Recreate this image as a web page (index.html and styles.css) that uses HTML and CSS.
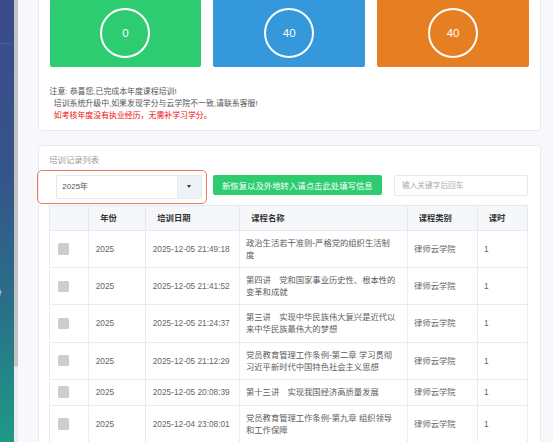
FILE: index.html
```html
<!DOCTYPE html>
<html lang="zh-CN">
<head>
<meta charset="utf-8">
<title>培训记录</title>
<link rel="stylesheet" href="styles.css">
</head>
<body>
<div class="layout">
  <aside class="sidebar">
    <div class="side-divider"></div>
    <div class="side-item">分</div>
  </aside>
  <div class="scrollbar"><div class="thumb"></div></div>
  <main class="main">
    <section class="panel panel-stats">
      <div class="stats">
        <div class="stat stat-green"><div class="ring">0</div></div>
        <div class="stat stat-blue"><div class="ring">40</div></div>
        <div class="stat stat-orange"><div class="ring">40</div></div>
      </div>
      <div class="notes">
        <p>注意: 恭喜您,已完成本年度课程培训!</p>
        <p class="indent">培训系统升级中,如果发现学分与云学院不一致,请联系客服!</p>
        <p class="indent warn">如考核年度没有执业经历，无需补学习学分。</p>
      </div>
    </section>
    <section class="panel panel-list">
      <div class="panel-title">培训记录列表</div>
      <div class="toolbar">
        <div class="highlight"></div>
        <div class="select">
          <span class="select-value">2025年</span>
          <span class="select-btn"><i class="caret"></i></span>
        </div>
        <button class="btn-green" type="button">新恢复以及外地转入请点击此处填写信息</button>
        <input class="search" type="text" placeholder="输入关键字后回车">
      </div>
      <table class="records">
        <colgroup>
          <col class="c-check"><col class="c-year"><col class="c-date"><col class="c-name"><col class="c-type"><col class="c-hours">
        </colgroup>
        <thead>
          <tr><th></th><th>年份</th><th>培训日期</th><th>课程名称</th><th>课程类别</th><th>课时</th></tr>
        </thead>
        <tbody>
          <tr><td class="cb"><span class="box"></span></td><td>2025</td><td>2025-12-05 21:49:18</td><td class="name">政治生活若干准则-严格党的组织生活制<br>度</td><td>律师云学院</td><td>1</td></tr>
          <tr><td class="cb"><span class="box"></span></td><td>2025</td><td>2025-12-05 21:41:52</td><td class="name">第四讲　党和国家事业历史性、根本性的<br>变革和成就</td><td>律师云学院</td><td>1</td></tr>
          <tr><td class="cb"><span class="box"></span></td><td>2025</td><td>2025-12-05 21:24:37</td><td class="name">第三讲　实现中华民族伟大复兴是近代以<br>来中华民族最伟大的梦想</td><td>律师云学院</td><td>1</td></tr>
          <tr><td class="cb"><span class="box"></span></td><td>2025</td><td>2025-12-05 21:12:29</td><td class="name">党员教育管理工作条例-第二章 学习贯彻<br>习近平新时代中国特色社会主义思想</td><td>律师云学院</td><td>1</td></tr>
          <tr><td class="cb"><span class="box"></span></td><td>2025</td><td>2025-12-05 20:08:39</td><td class="name">第十三讲　实现我国经济高质量发展</td><td>律师云学院</td><td>1</td></tr>
          <tr><td class="cb"><span class="box"></span></td><td>2025</td><td>2025-12-04 23:08:01</td><td class="name">党员教育管理工作条例-第九章 组织领导<br>和工作保障</td><td>律师云学院</td><td>1</td></tr>
        </tbody>
      </table>
    </section>
  </main>
</div>
</body>
</html>
```

FILE: styles.css
```css
* { box-sizing: border-box; }
html, body { margin: 0; height: 100%; }
body {
  font-family: "Liberation Sans", "Noto Sans CJK SC", sans-serif;
  font-size: 8.3px;
  color: #666;
  background: #f6f8fb;
  overflow: hidden;
}
.layout { display: flex; height: 442px; overflow: hidden; }

.sidebar {
  width: 14px;
  flex: none;
  display: flex;
  flex-direction: column;
  overflow: hidden;
  background: linear-gradient(180deg, #3a4b8b 0%, #35558a 40%, #2a6e89 68%, #1d9a86 100%);
}
.side-divider { margin-top: 43px; width: 11px; height: 1px; background: rgba(255,255,255,0.12); }
.side-item {
  margin-top: 243px;
  margin-left: -7px;
  color: rgba(255,255,255,0.85);
  font-size: 9px;
  line-height: 12px;
  white-space: nowrap;
}
.scrollbar { width: 4px; flex: none; background: #ededed; }
.thumb { height: 367px; background: #c4c4c4; border-radius: 0 0 2px 2px; }

.main { flex: 1; min-width: 0; padding: 0 12px 0 19.5px; overflow: hidden; }
.panel { background: #fff; border: 1px solid #e7ebf1; border-radius: 3px; }

.panel-stats { margin-top: -13px; padding: 11px 11px 7.6px 11px; }
.stats { display: grid; grid-template-columns: repeat(3, 1fr); gap: 12px; }
.stat {
  height: 68px;
  border-radius: 2px;
  display: flex;
  align-items: center;
  justify-content: center;
}
.stat-green { background: #2ecc71; }
.stat-blue { background: #3498db; }
.stat-orange { background: #e67e22; }
.ring {
  width: 50px;
  height: 50px;
  border: 2px solid #fff;
  border-radius: 50%;
  display: flex;
  align-items: center;
  justify-content: center;
  color: #fff;
  font-size: 11.5px;
}
.notes { margin-top: 18.5px; font-size: 7.9px; line-height: 12.3px; color: #555; }
.notes p { margin: 0; }
.notes .indent { padding-left: 4.3px; }
.notes .warn { color: #f20d0d; }

.panel-list { margin-top: 14px; padding: 8px 12px 0 10.8px; }
.panel-title { color: #9a9a9a; font-size: 8.3px; line-height: 12px; }
.toolbar { position: relative; display: flex; align-items: flex-start; margin-top: 9px; }
.highlight {
  position: absolute;
  left: -12px;
  top: -5px;
  width: 169.4px;
  height: 34px;
  border: 1px solid #ee7966;
  border-radius: 5px;
  pointer-events: none;
}
.select {
  margin-left: 6.4px;
  width: 146px;
  height: 24px;
  border: 1px solid #e5e9ef;
  border-radius: 2px;
  display: flex;
  background: #fff;
}
.select-value { flex: 1; padding-left: 5.6px; line-height: 22px; font-size: 8px; color: #555; }
.select-btn {
  width: 23.7px;
  background: #eef1f5;
  border-left: 1px solid #e5e9ef;
  display: flex;
  align-items: center;
  justify-content: center;
}
.caret {
  width: 0;
  height: 0;
  border-left: 2.6px solid transparent;
  border-right: 2.6px solid transparent;
  border-top: 3px solid #333;
}
.btn-green {
  margin-left: 11.3px;
  width: 168.7px;
  height: 20.3px;
  padding: 0;
  border: none;
  border-radius: 2px;
  background: #2ecc71;
  color: #fff;
  font-family: inherit;
  font-size: 8.4px;
  text-align: center;
}
.search {
  margin-left: 12.3px;
  width: 134px;
  height: 21px;
  padding: 0 7px;
  border: 1px solid #e5e9ef;
  border-radius: 2px;
  font-family: inherit;
  font-size: 7.7px;
  color: #555;
  outline: none;
}
.search::placeholder { color: #aaa; }

.records {
  margin-top: 6px;
  width: 100%;
  border-collapse: collapse;
  table-layout: fixed;
}
.c-check { width: 39px; }
.c-year { width: 57px; }
.c-date { width: 94px; }
.c-name { width: 167.4px; }
.c-type { width: 70px; }
.records th {
  padding: 6px 4px 6px 11px;
  line-height: 12px;
  text-align: left;
  font-weight: bold;
  color: #333;
  background: #f5f7fb;
  border: 1px solid #e4e9f0;
  white-space: nowrap;
}
.records td {
  padding: 6px 4px 6px 6.4px;
  line-height: 12.1px;
  vertical-align: middle;
  border: 1px solid #e9edf2;
  color: #666;
  white-space: nowrap;
}
.records td.name { padding-left: 5.7px; color: #5c5c5c; }
.records td.cb { padding-left: 7.4px; height: 26px; }
.box {
  display: block;
  width: 11.5px;
  height: 11.5px;
  background: #cdcdcd;
  border-radius: 1.5px;
}
```
